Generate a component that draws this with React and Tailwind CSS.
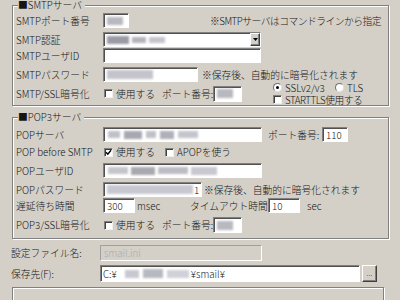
import React from "react";

const fieldCls =
  "bg-white border border-t-[#808080] border-l-[#808080] border-b-white border-r-white shadow-[inset_1px_1px_0_#505050] overflow-hidden flex items-center shrink-0";

function Field({ className = "", children }) {
  return <div className={`${fieldCls} ${className}`}>{children}</div>;
}

function Blur({ className = "" }) {
  return <span className={`block shrink-0 blur-[1px] ${className}`} />;
}

function Check({ checked }) {
  return (
    <span className="w-[9px] h-[9px] shrink-0 bg-white border border-t-[#808080] border-l-[#808080] border-b-[#f0f0f0] border-r-[#f0f0f0] shadow-[inset_1px_1px_0_#404040] flex items-center justify-center">
      {checked && (
        <svg width="7" height="7" viewBox="0 0 7 7">
          <path d="M1 3.2 L2.8 5.2 L6 1.2" fill="none" stroke="#000" strokeWidth="1.4" />
        </svg>
      )}
    </span>
  );
}

function Radio({ on }) {
  return (
    <span className="w-[9px] h-[9px] shrink-0 rounded-full bg-white border border-t-[#707070] border-l-[#707070] border-b-[#e0e0e0] border-r-[#e0e0e0] flex items-center justify-center">
      {on && <span className="w-[3px] h-[3px] rounded-full bg-black" />}
    </span>
  );
}

function Label({ className = "w-[87px]", children }) {
  return <span className={`shrink-0 whitespace-nowrap ${className}`}>{children}</span>;
}

export default function App() {
  return (
    <div className="w-[400px] h-[300px] overflow-hidden bg-[#d4d0c8] text-[#151515] font-light text-[9.75px] leading-[12px] font-['Noto_Sans_CJK_JP','Noto_Sans',sans-serif]">
      <div className="pl-[12px]">
        {/* SMTP group */}
        <fieldset className="w-[377px] border border-[#808080] shadow-[inset_1px_1px_0_#fff,1px_1px_0_#fff]">
          <legend className="ml-[5px] pr-[3px] h-[11px] leading-[11px] bg-[#d4d0c8] whitespace-nowrap">■SMTPサーバ</legend>
          <div className="pl-[3px]">
            <div className="mt-[2px] h-[15px] flex items-center">
              <Label>SMTPポート番号</Label>
              <Field className="w-[26px] h-[15px] pl-[3px]">
                <Blur className="w-[16px] h-[8px] bg-[#b8b8c0]" />
              </Field>
              <span className="ml-[81px] whitespace-nowrap tracking-[-0.5px]">※SMTPサーバはコマンドラインから指定</span>
            </div>

            <div className="mt-[4px] h-[15px] flex items-center">
              <Label>SMTP認証</Label>
              <Field className="w-[158px] h-[15px] pl-[3px] justify-between">
                <div className="flex items-center gap-[3px]">
                  <Blur className="w-[22px] h-[8px] bg-[#9a9aa4]" />
                  <Blur className="w-[14px] h-[6px] bg-[#b4b4bc]" />
                  <Blur className="w-[16px] h-[6px] bg-[#c4c4cc]" />
                </div>
                <div className="w-[10px] h-[13px] bg-[#d4d0c8] border border-t-white border-l-white border-b-[#404040] border-r-[#404040] shadow-[inset_-1px_-1px_0_#808080] flex items-center justify-center">
                  <svg width="5" height="3" viewBox="0 0 5 3">
                    <path d="M0 0 H5 L2.5 3 Z" fill="#000" />
                  </svg>
                </div>
              </Field>
            </div>

            <div className="mt-[1px] h-[15px] flex items-center">
              <Label>SMTPユーザID</Label>
              <Field className="w-[158px] h-[15px]" />
            </div>

            <div className="mt-[4px] h-[15px] flex items-center">
              <Label>SMTPパスワード</Label>
              <Field className="w-[95px] h-[15px] pl-[3px]">
                <Blur className="w-[46px] h-[9px] bg-[#c4c4cc]" />
              </Field>
              <span className="ml-[4px] whitespace-nowrap">※保存後、自動的に暗号化されます</span>
            </div>

            <div className="h-[23px] flex items-center">
              <Label>SMTP/SSL暗号化</Label>
              <div className="w-[59px] flex items-center pl-[1px] gap-[3px]">
                <Check />
                <span className="whitespace-nowrap">使用する</span>
              </div>
              <Label className="w-[51px]">ポート番号:</Label>
              <Field className="w-[29px] h-[16px] pl-[3px]">
                <Blur className="w-[16px] h-[9px] bg-[#b8b8c0]" />
              </Field>
              <div className="ml-[31px] flex flex-col">
                <div className="h-[12px] flex items-center">
                  <Radio on />
                  <span className="ml-[3px] w-[50px] whitespace-nowrap">SSLv2/v3</span>
                  <Radio />
                  <span className="ml-[3px] whitespace-nowrap">TLS</span>
                </div>
                <div className="h-[12px] flex items-center">
                  <Check />
                  <span className="ml-[3px] whitespace-nowrap tracking-[-0.5px]">STARTTLS使用する</span>
                </div>
              </div>
            </div>
          </div>
        </fieldset>

        {/* POP3 group */}
        <fieldset className="mt-[6px] w-[377px] border border-[#808080] shadow-[inset_1px_1px_0_#fff,1px_1px_0_#fff] pb-[5px]">
          <legend className="ml-[5px] pr-[3px] h-[11px] leading-[11px] bg-[#d4d0c8] whitespace-nowrap">■POP3サーバ</legend>
          <div className="pl-[3px]">
            <div className="mt-[4px] h-[15px] flex items-center">
              <Label>POPサーバ</Label>
              <Field className="w-[159px] h-[15px] pl-[4px] gap-[4px]">
                <Blur className="w-[12px] h-[7px] bg-[#c0c0c8]" />
                <Blur className="w-[18px] h-[8px] bg-[#a8a8b0]" />
                <Blur className="w-[10px] h-[7px] bg-[#c0c0c8]" />
                <Blur className="w-[14px] h-[8px] bg-[#b0b0b8]" />
                <Blur className="w-[20px] h-[7px] bg-[#c4c4cc]" />
              </Field>
              <Label className="ml-[6px] w-[54px]">ポート番号:</Label>
              <Field className="w-[26px] h-[15px] pl-[3px]">110</Field>
            </div>

            <div className="mt-[2px] h-[16px] flex items-center">
              <Label>POP before SMTP</Label>
              <div className="w-[62px] flex items-center pl-[1px] gap-[3px]">
                <Check checked />
                <span className="whitespace-nowrap">使用する</span>
              </div>
              <Check />
              <span className="ml-[3px] whitespace-nowrap">APOPを使う</span>
            </div>

            <div className="mt-[3px] h-[15px] flex items-center">
              <Label>POPユーザID</Label>
              <Field className="w-[159px] h-[15px] pl-[4px] gap-[3px]">
                <Blur className="w-[20px] h-[7px] bg-[#c4c4cc]" />
                <Blur className="w-[24px] h-[8px] bg-[#a8a8b0]" />
                <Blur className="w-[30px] h-[7px] bg-[#bcbcc4]" />
                <Blur className="w-[26px] h-[8px] bg-[#c8c8d0]" />
              </Field>
            </div>

            <div className="mt-[4px] h-[15px] flex items-center">
              <Label>POPパスワード</Label>
              <Field className="w-[99px] h-[15px] pl-[3px]">
                <Blur className="w-[86px] h-[9px] bg-[#c8c8d0]" />
                <span className="ml-[1px]">1</span>
              </Field>
              <span className="ml-[2px] whitespace-nowrap">※保存後、自動的に暗号化されます</span>
            </div>

            <div className="mt-[1px] h-[15px] flex items-center">
              <Label>遅延待ち時間</Label>
              <Field className="w-[32px] h-[15px] pl-[3px]">300</Field>
              <Label className="ml-[2px] w-[53px]">msec</Label>
              <Label className="w-[78px]">タイムアウト時間</Label>
              <Field className="w-[32px] h-[15px] pl-[3px]">10</Field>
              <span className="ml-[7px]">sec</span>
            </div>

            <div className="mt-[4px] h-[16px] flex items-center">
              <Label>POP3/SSL暗号化</Label>
              <div className="w-[59px] flex items-center pl-[1px] gap-[3px]">
                <Check />
                <span className="whitespace-nowrap">使用する</span>
              </div>
              <Label className="w-[51px]">ポート番号:</Label>
              <Field className="w-[29px] h-[16px] pl-[3px]">
                <Blur className="w-[16px] h-[9px] bg-[#b8b8c0]" />
              </Field>
            </div>
          </div>
        </fieldset>
      </div>

      {/* File settings */}
      <div className="pl-[11px]">
        <div className="mt-[6px] h-[16px] flex items-center">
          <Label className="w-[89px]">設定ファイル名:</Label>
          <div className="w-[162px] h-[16px] bg-[#d4d0c8] border border-t-[#a0a0a0] border-l-[#a0a0a0] border-b-white border-r-white flex items-center pl-[3px] text-[#a8a8a8]">
            smail.ini
          </div>
        </div>
        <div className="mt-[4px] h-[17px] flex items-center">
          <Label className="w-[89px]">保存先(F):</Label>
          <Field className="w-[260px] h-[17px] pl-[2px]">
            <span>C:¥</span>
            <div className="ml-[8px] flex items-center gap-[4px]">
              <Blur className="w-[14px] h-[8px] bg-[#c8c8d0]" />
              <Blur className="w-[20px] h-[9px] bg-[#b8b8c0]" />
              <Blur className="w-[22px] h-[8px] bg-[#d0d0d8]" />
            </div>
            <span className="ml-[2px]">¥smail¥</span>
          </Field>
          <div className="ml-[2px] w-[15px] h-[17px] bg-[#d4d0c8] border border-t-white border-l-white border-b-[#404040] border-r-[#404040] shadow-[inset_-1px_-1px_0_#808080] flex items-center justify-center text-[8px] leading-[8px] pb-[2px]">
            ...
          </div>
        </div>
        <div className="mt-[5px] ml-[1px] w-[372px] h-[20px] border border-[#808080] shadow-[inset_1px_1px_0_#fff,1px_1px_0_#fff]" />
      </div>
    </div>
  );
}
